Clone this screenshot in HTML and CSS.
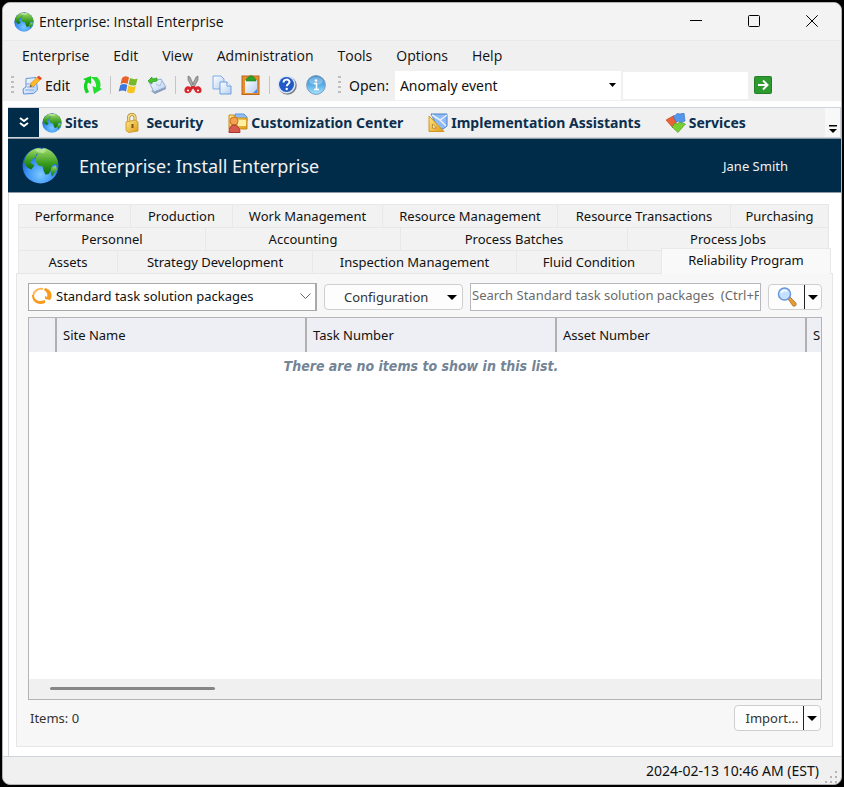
FILE: index.html
```
<!DOCTYPE html>
<html lang="en">
<head>
  <meta charset="UTF-8">
  <title>Enterprise: Install Enterprise</title>
  <link rel="stylesheet" href="styles.css">
</head>
<body>
  <svg class="sprite" width="0" height="0" aria-hidden="true">
    <defs>
      <radialGradient id="sea" cx=".5" cy=".75" r=".7">
        <stop offset="0" stop-color="#7cc8ff"/><stop offset=".55" stop-color="#3a92f6"/><stop offset="1" stop-color="#0f48b4"/>
      </radialGradient>
      <linearGradient id="land" x1="0" y1="0" x2="0" y2="1">
        <stop offset="0" stop-color="#a5dd6c"/><stop offset=".6" stop-color="#359a1d"/><stop offset="1" stop-color="#0f6a12"/>
      </linearGradient>
      <linearGradient id="paper" x1="0" y1="0" x2="1" y2="1">
        <stop offset="0" stop-color="#fff"/><stop offset="1" stop-color="#b5cff2"/>
      </linearGradient>
      <linearGradient id="gold" x1="0" y1="0" x2="1" y2="1">
        <stop offset="0" stop-color="#ffe98c"/><stop offset="1" stop-color="#dd9a12"/>
      </linearGradient>
      <linearGradient id="info" x1="0" y1="0" x2="0" y2="1">
        <stop offset="0" stop-color="#2f84cc"/><stop offset=".5" stop-color="#58aee8"/><stop offset="1" stop-color="#a5e6ff"/>
      </linearGradient>
      <symbol id="globe" viewBox="0 0 36 36">
        <circle cx="18" cy="18" r="17.5" fill="url(#sea)"/>
        <path d="M2 15C3 7 9 2 16 1l3 1-1 3-4 2-1 3-3 2-2 3 4 3-3 4-4-2z" fill="url(#land)"/>
        <path d="M14 9l4-6 3-2c7 1 13 7 14 14l-1 3-3-2-2 3-1 4-2 3-3 1-2-4-1-4-4-1-3-4z" fill="url(#land)"/>
        <path d="M29 20l4-2 1 4-5 7-1-4z" fill="url(#land)"/>
        <path d="M12 3q6-3 12 0l-3 3-6-1z" fill="#c9efb0" opacity=".6"/>
      </symbol>
    </defs>
  </svg>

  <div class="window">
    <header class="titlebar">
      <svg class="title-icon"><use href="#globe"/></svg>
      <span class="title">Enterprise: Install Enterprise</span>
      <button class="caption" aria-label="Minimize"><svg width="12" height="12" viewBox="0 0 12 12"><path d="M0 5.5h12"/></svg></button>
      <button class="caption" aria-label="Maximize"><svg width="12" height="12" viewBox="0 0 12 12"><rect x=".5" y=".5" width="11" height="11" rx="1"/></svg></button>
      <button class="caption" aria-label="Close"><svg width="12" height="12" viewBox="0 0 12 12"><path d="M.3.3l11.4 11.4M11.7.3L.3 11.7"/></svg></button>
    </header>

    <nav class="menubar">
      <button>Enterprise</button>
      <button>Edit</button>
      <button>View</button>
      <button>Administration</button>
      <button>Tools</button>
      <button>Options</button>
      <button>Help</button>
    </nav>

    <div class="toolbar">
      <span class="grip"></span>
      <button class="tool edit">
        <svg class="icon" viewBox="0 0 20 20"><path d="M4 3.500l10-1 1.500 12.500-4 3.500L1.500 19l-.5-5 3-2z" fill="url(#paper)" stroke="#5c92df"/><path d="M4 9h7M5 12h8M3 15h9" stroke="#7ea9e6" fill="none"/><path d="M8 12l1-4 7-6.500 3 2.500-7 7z" fill="#ffb928" stroke="#d98a18" stroke-width=".6"/><path d="M15 2.500L17 .7l3 2.500-2 2z" fill="#e8482b"/><path d="M8 12l.5-2 1.500 1z" fill="#333"/></svg>
        Edit
      </button>
      <button class="tool" aria-label="Refresh">
        <svg class="icon" viewBox="0 0 20 20"><path d="M1 4l8-3v8l-3-1.500Q4 11 7 17l-3 1.500Q0 12 3.500 5.500z" fill="#17d321"/><path d="M9 2h6q5 5 3 11l2 1-8 5-1.500-8 3.500 1.500Q15 7 9 2z" fill="#22de2d"/></svg>
      </button>
      <span class="sep"></span>
      <button class="tool" aria-label="Windows">
        <svg class="icon" viewBox="0 0 20 20"><path d="M4 3q3-3 7-.5L9.500 9Q6 7 2.500 9z" fill="#e8602a"/><path d="M12 3q4 2 7.500.5L18 10q-4 1.500-7.500-.7z" fill="#78b82a"/><path d="M2.300 10Q6 8 9.300 10L8 16.500q-3.500-2-7.300 0z" fill="#3f78dc"/><path d="M10.300 10.500q4 2 7.500.5l-1.500 6.500q-4 1.700-7.300-.5z" fill="#f5c421"/></svg>
      </button>
      <button class="tool" aria-label="Send">
        <svg class="icon" viewBox="0 0 20 20"><path d="M4 16l4 3 11-5-1-3z" fill="#8b99b8"/><path d="M2 7l12-3 5 8-12 5z" fill="url(#paper)" stroke="#91abd2"/><path d="M9 9l4 2 2-5" fill="none" stroke="#a9bedf"/><path d="M1 6l4-4v2l5-1v3l-5 1v2z" fill="#43c52c" stroke="#2a9b1b" stroke-width=".7"/></svg>
      </button>
      <span class="sep"></span>
      <button class="tool" aria-label="Cut">
        <svg class="icon" viewBox="0 0 20 20"><path d="M5 1l2 1 5 11-2 1L5 5zM15 1l-2 1-5 11 2 1 5-9z" fill="#a5a5a5" stroke="#686868" stroke-width=".6"/><path d="M9 11l-1.500 1C5 10 1 12 1.500 16c.5 3 6 3 7-.5L10 13l1.500 2.500c1 3.500 6.500 3.500 7 .5.500-4-3.500-6-6-4L11 11zM5 14.500c1.500 0 1.500 2 0 2s-1.500-2 0-2zM15 14.500c1.500 0 1.500 2 0 2s-1.500-2 0-2z" fill="#d9242b" fill-rule="evenodd"/></svg>
      </button>
      <button class="tool" aria-label="Copy">
        <svg class="icon" viewBox="0 0 20 20"><path d="M1 1h8l3 3v10H1z" fill="url(#paper)" stroke="#7caae8"/><path d="M8 7h7l4 4v8H8z" fill="url(#paper)" stroke="#6d9de0"/><path d="M15 7v4h4" fill="#fff" stroke="#6d9de0"/></svg>
      </button>
      <button class="tool" aria-label="Paste">
        <svg class="icon" viewBox="0 0 20 20"><rect x="1" y="1" width="17" height="18.500" fill="#e98d2d" stroke="#bd671e"/><path d="M4 5h12v13H4z" fill="url(#paper)"/><path d="M12 18l4-4v4z" fill="#4b8de0"/><path d="M5 6c0-2 1-3 2-3 1-3 5-3 6 0 1 0 2 1 2 3z" fill="#27a32c" stroke="#167a1b" stroke-width=".6"/></svg>
      </button>
      <span class="sep"></span>
      <button class="tool" aria-label="Help">
        <svg class="icon" viewBox="0 0 20 20"><circle cx="10.500" cy="10.500" r="9.300" fill="#7d8087"/><circle cx="9.500" cy="9.500" r="9" fill="#dce8fb"/><circle cx="9.500" cy="9.500" r="7.500" fill="#2359c4"/><path d="M6.500 7.500C6.500 3.700 12.700 3.800 12.500 7c-.1 2-2.700 2-2.700 4.300" fill="none" stroke="#fff" stroke-width="2"/><circle cx="9.700" cy="14" r="1.200" fill="#fff"/></svg>
      </button>
      <button class="tool" aria-label="Information">
        <svg class="icon" viewBox="0 0 20 20"><circle cx="10" cy="10" r="9.400" fill="url(#info)" stroke="#7d9cb9"/><ellipse cx="10" cy="6" rx="7" ry="4" fill="#fff" opacity=".3"/><circle cx="10" cy="5.500" r="1.300" fill="#fff"/><path d="M8 8.500h2.500V14M8 14.500h5" stroke="#fff" stroke-width="1.500" fill="none"/></svg>
      </button>
      <span class="grip"></span>
      <label class="open-label" for="open">Open:</label>
      <span class="open-combo">
        <select id="open"><option>Anomaly event</option></select>
        <svg width="7" height="4" viewBox="0 0 7 4"><path d="M0 0h7L3.500 4z"/></svg>
      </span>
      <input class="open-text" type="text" aria-label="Item to open">
      <button class="go" aria-label="Go"><svg width="18" height="18" viewBox="0 0 18 18"><rect x=".5" y=".5" width="17" height="17" rx="1" fill="#2d9a30" stroke="#237d28"/><path d="M4 9h9M9 4.500L13.500 9 9 13.500" fill="none" stroke="#fff" stroke-width="2"/></svg></button>
    </div>

    <div class="workspace">
      <nav class="shortcuts">
        <button class="expand" aria-label="Expand"><svg width="10" height="11" viewBox="0 0 10 11"><path d="M1 1l4 3 4-3M1 6l4 3 4-3"/></svg></button>
        <a href="#"><svg class="icon"><use href="#globe"/></svg>Sites</a>
        <a href="#"><svg class="icon" viewBox="0 0 20 20"><path d="M6 9L5.500 5c0-4 6-5 6.500-1v5" fill="none" stroke="#b08a2a" stroke-width="3"/><path d="M6 9L5.500 5c0-4 6-5 6.500-1v5" fill="none" stroke="#f6df8c" stroke-width="1.500"/><path d="M3 9l9-2 3 2v9l-9 1.500-3-2z" fill="url(#gold)" stroke="#c8931f" stroke-width=".8"/><path d="M9.500 11v4" stroke="#7e5810" stroke-width="2"/></svg>Security</a>
        <a href="#"><svg class="icon" viewBox="0 0 20 20"><path d="M7 5V1h9l3 3v4z" fill="#8fbdf5" stroke="#5f96de"/><path d="M1 2h5l2 3h11v11H1z" fill="url(#gold)" stroke="#c98b1c"/><path d="M10 7h8v6h-8z" fill="#fff0a0"/><circle cx="6" cy="8" r="4" fill="#f4a24e" stroke="#c8742a"/><path d="M1 19.500C1 15 3 12 6 12s6 3 6 7.500z" fill="#d85a4d" stroke="#a83733"/></svg>Customization Center</a>
        <a href="#"><svg class="icon" viewBox="0 0 20 20"><path d="M3 1h16v12l-4 3-5-1z" fill="#8fbaf3" stroke="#4a80cc"/><path d="M4 2l8 5 7-5M12 7l6 6" fill="none" stroke="#e5f0ff" stroke-width="1.500"/><path d="M1 3l15 15.500H1z" fill="url(#gold)" stroke="#d1962a"/><path d="M4.500 11l4 4h-4z" fill="#fff7cf" stroke="#a8761d" stroke-width=".7"/></svg>Implementation Assistants</a>
        <a href="#"><svg class="icon" viewBox="0 0 20 20"><path d="M0 7l7-4 4 4-1 3-3 5z" fill="#ea6138" stroke="#b8401f" stroke-width=".6"/><path d="M7 3l3-1 1-1.500 3 .5 4-1 1 8-4 2-2-2-3 1z" fill="#5597ec" stroke="#2d6ac0" stroke-width=".6"/><path d="M6 14l3-4 3 1 1-2 3 1 3.500 1L12 19.500z" fill="#77cf32" stroke="#4a971c" stroke-width=".6"/></svg>Services</a>
        <button class="more" aria-label="More"><svg width="8" height="8" viewBox="0 0 8 8"><path d="M0 0h8v1.500H0zM0 4h8L4 8z"/></svg></button>
      </nav>

      <div class="banner">
        <svg class="banner-icon"><use href="#globe"/></svg>
        <h1>Enterprise: Install Enterprise</h1>
        <span class="user">Jane Smith</span>
      </div>

      <main class="content">
        <div class="tabs" role="tablist">
          <div class="tab-row row-1">
            <button role="tab">Performance</button>
            <button role="tab">Production</button>
            <button role="tab">Work Management</button>
            <button role="tab">Resource Management</button>
            <button role="tab">Resource Transactions</button>
            <button role="tab">Purchasing</button>
          </div>
          <div class="tab-row row-2">
            <button role="tab">Personnel</button>
            <button role="tab">Accounting</button>
            <button role="tab">Process Batches</button>
            <button role="tab">Process Jobs</button>
          </div>
          <div class="tab-row row-3">
            <button role="tab">Assets</button>
            <button role="tab">Strategy Development</button>
            <button role="tab">Inspection Management</button>
            <button role="tab">Fluid Condition</button>
            <button role="tab" class="active" aria-selected="true">Reliability Program</button>
          </div>
        </div>

        <section class="panel">
          <div class="filters">
            <span class="view-combo">
              <svg class="icon" viewBox="0 0 20 20"><path d="M11 3C6 2 2 5 1.500 9" fill="none" stroke="#ffb75e" stroke-width="2"/><path d="M0 9l2 0c0 4 3 6 7 6l4-1v3C6 20 0 16 0 9z" fill="#f79a1e"/><path d="M13 2c7 2 8 8 5 12l-5-1v-3l2 1c1-3 0-5-3-7z" fill="#f79a1e"/></svg>
              <select aria-label="List"><option>Standard task solution packages</option></select>
              <svg class="chevron" width="11" height="6" viewBox="0 0 11 6"><path d="M.5.5l5 5 5-5"/></svg>
            </span>
            <button class="btn config">Configuration<svg width="10" height="5" viewBox="0 0 10 5"><path d="M0 0h10L5 5z"/></svg></button>
            <input class="search" type="text" aria-label="Search" placeholder="Search Standard task solution packages  (Ctrl+F)">
            <span class="split">
              <button aria-label="Search"><svg class="icon" viewBox="0 0 20 20"><path d="M11 12l2-2 6 6c1 2-1 4-3 3z" fill="#e59a36" stroke="#a8661e" stroke-width=".7"/><circle cx="7.500" cy="7" r="6" fill="#c4e2ff" stroke="#6796df" stroke-width="1.500"/><path d="M4 6c1-3 4-3 6-2" fill="none" stroke="#fff" stroke-width="1.500"/></svg></button>
              <button class="drop" aria-label="Search options"><svg width="10" height="5" viewBox="0 0 10 5"><path d="M0 0h10L5 5z"/></svg></button>
            </span>
          </div>

          <div class="list">
            <table>
              <colgroup><col class="col-mark"><col class="col-data"><col class="col-data"><col class="col-data"><col></colgroup>
              <thead>
                <tr><th></th><th>Site Name</th><th>Task Number</th><th>Asset Number</th><th>S</th></tr>
              </thead>
              <tbody>
                <tr><td colspan="5" class="empty">There are no items to show in this list.</td></tr>
              </tbody>
            </table>
            <div class="scrollbar"><div class="thumb"></div></div>
          </div>

          <div class="list-footer">
            <span>Items: 0</span>
            <span class="split">
              <button>Import...</button>
              <button class="drop" aria-label="Import options"><svg width="10" height="5" viewBox="0 0 10 5"><path d="M0 0h10L5 5z"/></svg></button>
            </span>
          </div>
        </section>
      </main>
    </div>

    <footer class="statusbar">
      <span>2024-02-13 10:46 AM (EST)</span>
      <svg width="14" height="14" viewBox="0 0 14 14"><path d="M10 1h2v2h-2zM5 6h2v2H5zM10 6h2v2h-2zM0 11h2v2H0zM5 11h2v2H5zM10 11h2v2h-2z"/></svg>
    </footer>
  </div>
</body>
</html>
```
FILE: styles.css
```
* { box-sizing: border-box; }
body { margin: 0; background: #000; color: #111; font-family: "Noto Sans", sans-serif; font-size: 14px; }
button, select, input { font: inherit; color: inherit; border: 0; background: none; padding: 0; margin: 0; border-radius: 0; }
select { appearance: none; outline: 0; min-width: 0; }
.sprite { position: absolute; }
.icon { width: 20px; height: 20px; flex: none; }

.window { display: flex; flex-direction: column; height: calc(100vh - 4px); margin: 2px; background: #f0f0f0; border: 1px solid #b4b4b4; border-radius: 8px; overflow: hidden; }

/* title bar and menu */
.titlebar { display: flex; align-items: center; height: 38px; padding-left: 11px; background: #f3f3f3; border-bottom: 1px solid #e9e9e9; }
.title-icon { width: 20px; height: 20px; margin-right: 5px; }
.title { flex: 1; font-family: "Open Sans", sans-serif; }
.caption { width: 58px; height: 38px; }
.caption svg { fill: none; stroke: #000; }
.menubar { display: flex; align-items: center; gap: 24px; height: 28px; padding-left: 19px; font-family: "Open Sans", sans-serif; }

/* toolbar */
.toolbar { display: flex; align-items: center; height: 32px; padding-left: 8px; }
.grip { width: 3px; height: 18px; background: repeating-linear-gradient(#bdbdbd 0 2px, transparent 2px 5px); }
.tool { display: flex; align-items: center; gap: 3px; margin-left: 9px; }
.edit { margin: 0 3px 0 8px; }
.sep { width: 1px; height: 18px; margin-left: 8px; margin-right: -2px; background: #c4c4c4; }
.toolbar .grip + .open-label { margin: 0 6px 0 8px; }
.tool + .grip { margin-left: 12px; }
.open-combo { display: flex; align-items: center; width: 226px; height: 29px; padding: 0 5px; background: #fff; }
.open-combo select { flex: 1; }
.open-text { width: 125px; height: 27px; margin-left: 2px; background: #fff; }
.go { display: flex; margin-left: 6px; }

/* shortcut bar and banner */
.workspace { flex: 1; display: flex; flex-direction: column; min-height: 0; padding: 6px 0 0 5px; background: #fff; }
.shortcuts { display: flex; align-items: center; height: 31px; border: 1px solid #cfd4da; border-left: 0; background: #f0f0f0; color: #0b2f4e; font-weight: bold; }
.shortcuts a { display: flex; align-items: center; gap: 3px; margin-right: 25px; color: inherit; text-decoration: none; }
.expand { display: flex; align-items: center; justify-content: center; width: 31px; height: 29px; margin-right: 3px; background: #002b49; }
.expand svg { fill: none; stroke: #fff; stroke-width: 2; }
.more { display: flex; align-items: flex-end; justify-content: center; align-self: stretch; margin-left: auto; width: 15px; padding-bottom: 4px; background: #f8f8f8; }
.banner { display: flex; align-items: center; height: 55px; padding: 0 53px 0 14px; background: #002b49; border-top: 1px solid #8d9aa6; border-bottom: 1px solid #8d9aa6; color: #f2f2f2; font-size: 13px; }
.banner-icon { width: 37px; height: 37px; margin-right: 20px; }
.banner h1 { flex: 1; margin: 0; font-size: 18px; font-weight: normal; }

/* tabs */
.content { flex: 1; display: flex; flex-direction: column; min-height: 0; padding: 11px 8px 9px 7px; border-left: 1px solid #d5d8dd; font-size: 13px; }
.tabs { padding: 0 4px 0 2px; }
.tab-row { display: grid; height: 23px; }
.tab-row button { background: #f2f2f2; border: 1px solid #e8e8e8; border-width: 1px 0 0 1px; white-space: nowrap; }
.tab-row button:last-child { border-right-width: 1px; }
.row-1 { grid-template-columns: 112fr 102fr 150fr 175fr 173fr 99fr; }
.row-2 { grid-template-columns: 187fr 195fr 227fr 202fr; }
.row-3 { grid-template-columns: 99fr 195fr 204fr 145fr 170fr; margin-right: -2px; }
.tab-row .active { margin: -2px 0 -1px; padding-bottom: 3px; background: #f9f9f9; z-index: 1; }

/* list panel */
.panel { flex: 1; display: flex; flex-direction: column; min-height: 0; padding: 9px 10px 15px 11px; background: #f7f7f7; border: 1px solid #e6e6e6; }
.filters { display: flex; align-items: center; height: 28px; margin-bottom: 6px; gap: 7px; color: #333; }
.view-combo { display: flex; align-items: center; width: 289px; height: 28px; padding: 0 4px 2px 3px; border: 1px solid #a9a9a9; border-right-width: 2px; background: #fff; color: #111; }
.view-combo select { flex: 1; padding: 0 4px; }
.chevron { fill: none; stroke: #666; }
.btn, .split { border: 1px solid #cfcfcf; border-radius: 4px; background: #fdfdfd; }
.config { display: flex; align-items: center; justify-content: space-between; width: 139px; height: 26px; padding: 0 5px 0 19px; }
.search { flex: 1; min-width: 0; height: 28px; padding: 0 1px 4px; border: 1px solid #b7b7bd; background: #fff; }
.search::placeholder { color: #6b6b6b; white-space: pre; }
.split { display: flex; height: 26px; }
.split button { display: flex; align-items: center; justify-content: center; width: 35px; }
.split .drop { width: 17px; border-left: 1px solid #222; }
.list { flex: 1; display: flex; flex-direction: column; min-height: 0; border: 1px solid #b4b4b8; background: #fff; overflow: hidden; }
table { width: 100%; table-layout: fixed; border-collapse: separate; border-spacing: 0; }
.col-mark { width: 28px; }
.col-data { width: 250px; }
th { height: 34px; padding: 0 0 0 6px; background: #eeeff4; border-right: 2px solid #b0b0b0; font-weight: normal; text-align: left; white-space: nowrap; overflow: hidden; }
th:last-child { border-right: 0; }
.empty { height: 28px; padding: 0 8px 0 0; color: #738496; font-family: "DejaVu Sans Condensed", "DejaVu Sans", sans-serif; font-size: 14px; font-weight: bold; font-style: italic; text-align: center; }
.scrollbar { height: 20px; margin-top: auto; padding: 8px 0 0 21px; background: #f0f0f0; }
.thumb { width: 165px; height: 3px; border-radius: 2px; background: #868686; }
.list-footer { display: flex; align-items: center; justify-content: space-between; margin-top: 5px; padding: 0 1px 0 2px; color: #333; }
.list-footer .split button:first-child { width: 68px; padding-left: 6px; }
.list-footer .split .drop { width: 17px; }

.statusbar { display: flex; align-items: center; justify-content: flex-end; gap: 6px; height: 28px; padding-right: 2px; border-top: 1px solid #cfd4da; }
.statusbar svg { fill: #b5b5b5; align-self: flex-end; }
```
